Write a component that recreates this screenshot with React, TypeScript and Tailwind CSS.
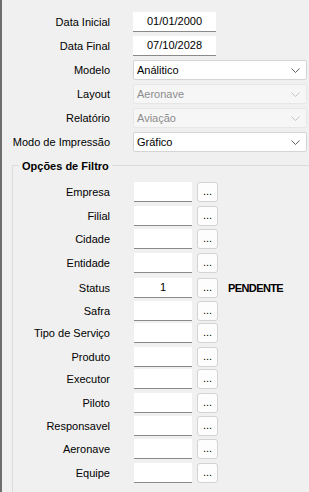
import React from "react";

const font = { fontFamily: '"Liberation Sans", Arial, sans-serif' };

function Chevron({ disabled }: { disabled?: boolean }) {
  return (
    <svg width="9" height="5" viewBox="0 0 9 5" className="shrink-0">
      <path d="M0.5 0.5 L4.5 4.5 L8.5 0.5" fill="none" stroke={disabled ? "#c4c4c4" : "#5f5f5f"} strokeWidth="1" />
    </svg>
  );
}

function Select({ value, disabled }: { value: string; disabled?: boolean }) {
  return (
    <div
      className={
        disabled
          ? "ml-[23px] w-[174px] h-[20px] flex items-center justify-between pl-[3px] pr-[6px] border border-[#e6e6e6] bg-[#f6f6f6] text-[#8c8c8c] rounded-[2px]"
          : "ml-[23px] w-[174px] h-[20px] flex items-center justify-between pl-[3px] pr-[6px] border border-[#d4d4d4] bg-white text-black rounded-[2px]"
      }
    >
      <span>{value}</span>
      <Chevron disabled={disabled} />
    </div>
  );
}

function DateInput({ value }: { value: string }) {
  return (
    <div className="ml-[23px] w-[83px] h-[20px] bg-white border-b border-[#8a8a8a] flex items-center justify-center text-black">
      {value}
    </div>
  );
}

const topRows: { label: string; kind: "date" | "select" | "disabled"; value: string }[] = [
  { label: "Data Inicial", kind: "date", value: "01/01/2000" },
  { label: "Data Final", kind: "date", value: "07/10/2028" },
  { label: "Modelo", kind: "select", value: "Análitico" },
  { label: "Layout", kind: "disabled", value: "Aeronave" },
  { label: "Relatório", kind: "disabled", value: "Aviação" },
  { label: "Modo de Impressão", kind: "select", value: "Gráfico" },
];

const filterRows: { label: string; mt: string; value?: string; extra?: string }[] = [
  { label: "Empresa", mt: "mt-0" },
  { label: "Filial", mt: "mt-[4px]" },
  { label: "Cidade", mt: "mt-[3px]" },
  { label: "Entidade", mt: "mt-[4px]" },
  { label: "Status", mt: "mt-[5px]", value: "1", extra: "PENDENTE" },
  { label: "Safra", mt: "mt-[3px]" },
  { label: "Tipo de Serviço", mt: "mt-[2px]" },
  { label: "Produto", mt: "mt-[4px]" },
  { label: "Executor", mt: "mt-[2px]" },
  { label: "Piloto", mt: "mt-[4px]" },
  { label: "Responsavel", mt: "mt-[3px]" },
  { label: "Aeronave", mt: "mt-[3px]" },
  { label: "Equipe", mt: "mt-[4px]" },
];

export default function App() {
  return (
    <div
      className="w-[309px] h-[492px] bg-[#f0f0f0] border-l-2 border-[#6e6e6e] overflow-hidden text-[11px] leading-none text-black whitespace-nowrap"
      style={font}
    >
      <div className="pt-[12px] flex flex-col gap-[4px]">
        {topRows.map((r) => (
          <div key={r.label} className="flex items-center h-[20px]">
            <div className="w-[108px] text-right">{r.label}</div>
            {r.kind === "date" ? (
              <DateInput value={r.value} />
            ) : (
              <Select value={r.value} disabled={r.kind === "disabled"} />
            )}
          </div>
        ))}
      </div>

      <div className="relative ml-[10px] mt-[13px] w-[320px] h-[400px] border-t border-l border-[#dcdcdc] pt-[16px]">
        <span className="absolute left-[6px] top-[-8px] px-[3px] bg-[#f0f0f0] font-bold leading-[16px]">
          Opções de Filtro
        </span>
        {filterRows.map((r) => (
          <div key={r.label} className={"flex items-center h-[20px] " + r.mt}>
            <div className="w-[97px] text-right">{r.label}</div>
            <div className="ml-[24px] w-[58px] h-[20px] bg-white border-b border-[#8a8a8a] flex items-center justify-center">
              {r.value ?? ""}
            </div>
            <div className="ml-[5px] w-[21px] h-[20px] bg-[#fdfdfd] border border-[#d3d3d3] rounded-[3px] flex items-end justify-center pb-[4px] text-[11px]">
              ...
            </div>
            {r.extra ? <span className="ml-[10px] font-bold tracking-[-0.6px]">{r.extra}</span> : null}
          </div>
        ))}
      </div>
    </div>
  );
}
